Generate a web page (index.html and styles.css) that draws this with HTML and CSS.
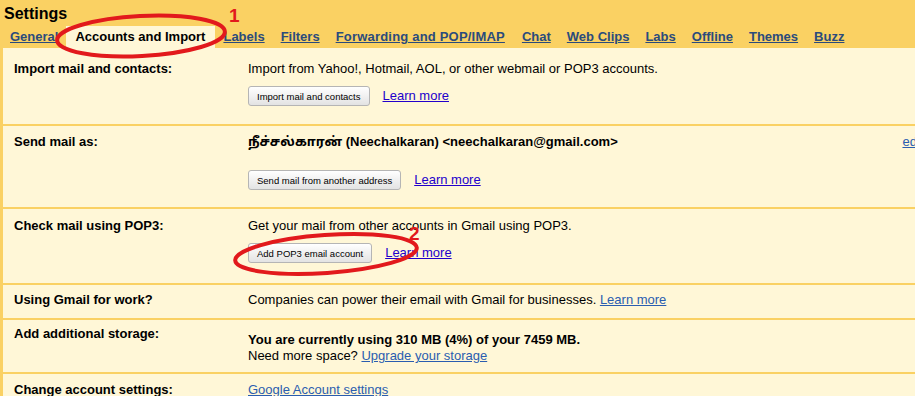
FILE: index.html
```html
<!DOCTYPE html>
<html lang="en">
<head>
    <meta charset="UTF-8">
    <title>Settings</title>
    <link rel="stylesheet" href="styles.css">
</head>
<body>
    <div class="page">
        <h1 class="title">Settings</h1>
        <div class="tabs">
            <a class="tab" href="#">General</a>
            <a class="tab active" href="#">Accounts and Import</a>
            <a class="tab" href="#">Labels</a>
            <a class="tab" href="#">Filters</a>
            <a class="tab wide" href="#">Forwarding and POP/IMAP</a>
            <a class="tab" href="#">Chat</a>
            <a class="tab" href="#">Web Clips</a>
            <a class="tab" href="#">Labs</a>
            <a class="tab" href="#">Offline</a>
            <a class="tab" href="#">Themes</a>
            <a class="tab" href="#">Buzz</a>
        </div>

        <div class="settings">
            <div class="row row-import">
                <div class="label">Import mail and contacts:</div>
                <div class="value">
                    <div>Import from Yahoo!, Hotmail, AOL, or other webmail or POP3 accounts.</div>
                    <div class="actions">
                        <button class="btn">Import mail and contacts</button>
                        <a class="learn" href="#">Learn more</a>
                    </div>
                </div>
            </div>
            <div class="row row-send">
                <div class="label">Send mail as:</div>
                <div class="value">
                    <div class="strong">நீச்சல்காரன் (Neechalkaran) &lt;neechalkaran@gmail.com&gt;</div>
                    <div class="actions">
                        <button class="btn">Send mail from another address</button>
                        <a class="learn" href="#">Learn more</a>
                    </div>
                </div>
                <a class="edit" href="#">edit info</a>
            </div>
            <div class="row row-pop">
                <div class="label">Check mail using POP3:</div>
                <div class="value">
                    <div>Get your mail from other accounts in Gmail using POP3.</div>
                    <div class="actions">
                        <button class="btn">Add POP3 email account</button>
                        <a class="learn" href="#">Learn more</a>
                    </div>
                </div>
            </div>
            <div class="row row-work">
                <div class="label">Using Gmail for work?</div>
                <div class="value">
                    Companies can power their email with Gmail for businesses. <a class="soft" href="#">Learn more</a>
                </div>
            </div>
            <div class="row row-storage">
                <div class="label">Add additional storage:</div>
                <div class="value">
                    <div class="strong">You are currently using 310 MB (4%) of your 7459 MB.</div>
                    <div>Need more space? <a class="soft" href="#">Upgrade your storage</a></div>
                </div>
            </div>
            <div class="row row-account">
                <div class="label">Change account settings:</div>
                <div class="value">
                    <a class="soft" href="#">Google Account settings</a>
                </div>
            </div>
        </div>
    </div>

    <!-- hand-drawn annotations -->
    <svg class="mark mark-one" width="180" height="50" viewBox="0 0 180 50">
        <ellipse cx="87" cy="24" rx="84" ry="20" fill="none" stroke="#e2191c" stroke-width="4" transform="rotate(-3 87 24)"/>
    </svg>
    <span class="num num-one">1</span>
    <svg class="mark mark-two" width="192" height="48" viewBox="0 0 192 48">
        <ellipse cx="94" cy="23" rx="91" ry="19" fill="none" stroke="#e2191c" stroke-width="4" transform="rotate(-4 94 23)"/>
    </svg>
    <span class="num num-two">2</span>
</body>
</html>
```

FILE: styles.css
```css
body {
    margin: 0;
    background-color: #fad163;
    font-family: "Liberation Sans", Arial, "Noto Sans Tamil", sans-serif;
    font-size: 13px;
    color: #000;
    overflow: hidden;
}
.page {
    width: 958px;
}
.title {
    margin: 0;
    padding: 4px 0 2px 4px;
    font-size: 16px;
    line-height: 20px;
}
.tabs {
    display: flex;
    padding-left: 2px;
}
.tab {
    padding: 3px 8px;
    line-height: 16px;
    font-weight: bold;
    color: #2b4b7c;
    white-space: nowrap;
}
.tab.wide {
    letter-spacing: 0.2px;
    padding-right: 9px;
}
.tab.active {
    padding: 3px 10px 3px 9px;
    background-color: #fff7d7;
    color: #000;
    text-decoration: none;
}
.settings {
    background-color: #fff7d7;
    border-left: 3px solid #fad163;
}
.row {
    display: flex;
    align-items: flex-start;
    line-height: 16px;
    border-bottom: 2px solid #fad163;
    padding-right: 10px;
}
.label {
    width: 234px;
    padding-left: 11px;
    font-weight: bold;
    flex-shrink: 0;
}
.value {
    flex: 1;
}
.strong {
    font-weight: bold;
}
.actions {
    display: flex;
    align-items: center;
    gap: 13px;
}
.btn {
    height: 20px;
    padding: 0 8px;
    font-family: "Liberation Sans", Arial, sans-serif;
    font-size: 9.5px;
    color: #000;
    background: linear-gradient(#ffffff, #e3e3e3);
    border: 1px solid #b5b5b5;
    border-radius: 3px;
}
.learn {
    color: #2200cc;
}
.soft {
    color: #2a5db0;
}
.edit {
    color: #2a5db0;
    white-space: nowrap;
    margin-left: auto;
}
.row-import { padding-top: 13px; padding-bottom: 18px; }
.row-import .actions { margin-top: 9px; }
.row-send { padding-top: 8px; padding-bottom: 17px; }
.row-send .actions { margin-top: 20px; }
.row-pop { padding-top: 9px; padding-bottom: 20px; }
.row-pop .actions { margin-top: 9px; }
.row-work { padding-top: 7px; padding-bottom: 10px; }
.row-storage { padding-top: 6px; padding-bottom: 8px; }
.row-storage .value { margin-top: 6px; }
.row-account { padding-top: 8px; padding-bottom: 10px; border-bottom: none; }

.mark {
    position: absolute;
}
.mark-one {
    left: 54px;
    top: 12px;
}
.mark-two {
    left: 232px;
    top: 231px;
}
.num {
    position: absolute;
    color: #e2191c;
    font-size: 19px;
    font-weight: bold;
    line-height: 20px;
}
.num-one {
    left: 229px;
    top: 6px;
}
.num-two {
    left: 409px;
    top: 224px;
}
```
